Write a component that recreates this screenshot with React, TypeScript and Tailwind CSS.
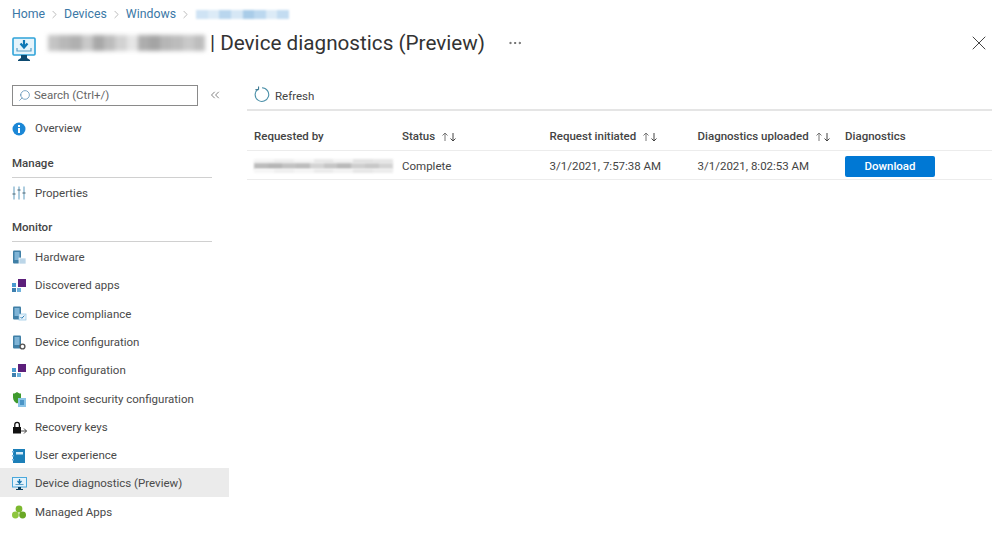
import { ChevronRight, ChevronsLeft, MoreHorizontal, Search, X } from "lucide-react";
import type { ReactNode } from "react";

const blurCols = ["#c4c4c4", "#b8b8b8", "#b0b0b0", "#c9c9c9", "#a8a8a8", "#bcbcbc", "#d2d2d2", "#e6e6e6", "#adadad", "#a4a4a4", "#b6b6b6", "#bcbcbc", "#c9c9c9", "#bdbdbd"];

function Redacted({ width, height, colors = blurCols, blur = "blur-[1px]" }: { width: string; height: string; colors?: string[]; blur?: string }) {
  return (
    <div className={`flex ${width} ${height} ${blur}`}>
      {colors.map((c, i) => (
        <div key={i} className="flex-1" style={{ backgroundColor: c }} />
      ))}
    </div>
  );
}

function PhoneIcon({ badge }: { badge: ReactNode }) {
  return (
    <svg width="16" height="16" viewBox="0 0 16 16">
      <rect x="1" y="0.5" width="8" height="13" rx="1" fill="#3f7fa6" />
      <rect x="2.5" y="2" width="5" height="8" fill="#7fb4d6" />
      {badge}
    </svg>
  );
}

const icons: Record<string, ReactNode> = {
  overview: (
    <svg width="14" height="14" viewBox="0 0 14 14">
      <circle cx="7" cy="7" r="6.5" fill="#1b87d6" />
      <rect x="6" y="6" width="2" height="5" fill="#fff" />
      <rect x="6" y="3" width="2" height="2" fill="#fff" />
    </svg>
  ),
  properties: (
    <svg width="14" height="14" viewBox="0 0 14 14">
      <path d="M2 0.5v13M7 0.5v13M12 0.5v13" stroke="#a5c8dc" strokeWidth="1.8" />
      <path d="M2 7v2M7 3v2M12 6v2" stroke="#7f98a6" strokeWidth="2.8" />
    </svg>
  ),
  hardware: <PhoneIcon badge={<rect x="7" y="8" width="7" height="6" fill="#bcd6e8" stroke="#fff" strokeWidth="0.7" />} />,
  apps: (
    <svg width="14" height="14" viewBox="0 0 14 14">
      <rect x="6" y="0" width="8" height="8" fill="#5c1f7a" />
      <rect x="0" y="4" width="4" height="4" fill="#4a9bd0" />
      <rect x="0" y="9" width="4" height="4" fill="#3d7fae" />
      <rect x="5" y="9" width="4" height="4" fill="#6fb1dc" />
    </svg>
  ),
  compliance: (
    <PhoneIcon
      badge={
        <g>
          <rect x="7" y="8" width="7" height="6" fill="#e8f3fa" stroke="#8fc2e2" strokeWidth="0.7" />
          <path d="M8.5 11l1.3 1.3 2.5-2.6" stroke="#2d7fb8" strokeWidth="1" fill="none" />
        </g>
      }
    />
  ),
  config: <PhoneIcon badge={<circle cx="10.5" cy="11.5" r="2.4" fill="#fff" stroke="#555" strokeWidth="1.4" />} />,
  endpoint: (
    <svg width="14" height="15" viewBox="0 0 14 15">
      <path d="M1 1.5c2 0 3-.6 4-1.5 1 .9 2 1.5 4 1.5v4c0 3-2 5-4 6-2-1-4-3-4-6z" fill="#3f9a2d" />
      <rect x="6" y="6" width="8" height="9" fill="#8cc4e6" />
      <rect x="8" y="8" width="4" height="5" fill="#4a94c6" />
    </svg>
  ),
  recovery: (
    <svg width="16" height="14" viewBox="0 0 16 14">
      <path d="M2.8 6V3.6a2.3 2.3 0 0 1 4.6 0V6" stroke="#111" strokeWidth="1.3" fill="none" />
      <rect x="1" y="6" width="8" height="6.5" fill="#111" />
      <path d="M9 10h5.5M12 7.5l2.5 2.5-2.5 2.5" stroke="#333" strokeWidth="0.9" fill="none" />
    </svg>
  ),
  ux: (
    <svg width="13" height="14" viewBox="0 0 13 14">
      <rect x="1" y="0" width="12" height="14" fill="#1c7fb8" />
      <rect x="0" y="2" width="2" height="1.5" fill="#6fb1dc" />
      <rect x="0" y="6" width="2" height="1.5" fill="#6fb1dc" />
      <rect x="0" y="10" width="2" height="1.5" fill="#6fb1dc" />
      <rect x="4" y="3" width="7" height="2.5" fill="#d5ebf8" />
    </svg>
  ),
  diag: (
    <svg width="15" height="14" viewBox="0 0 15 14">
      <rect x="0.5" y="0.5" width="14" height="9.5" fill="#e3f2fb" stroke="#4aa8dc" />
      <path d="M7.5 2v3.5M5.5 4l2 2.2 2-2.2" stroke="#1674ad" strokeWidth="1.3" fill="none" />
      <path d="M3.5 7.5h8" stroke="#5b9dc4" />
      <path d="M6 10h3v2h2v1H4v-1h2z" fill="#10405f" />
    </svg>
  ),
  managed: (
    <svg width="14" height="14" viewBox="0 0 14 14">
      <circle cx="7" cy="4" r="3.4" fill="#7cb82f" />
      <circle cx="3.4" cy="10" r="3.4" fill="#8ec63f" />
      <circle cx="10.6" cy="10" r="3.4" fill="#6aa825" />
    </svg>
  ),
};

function NavItem({ label, icon, active }: { label: string; icon: string; active?: boolean }) {
  return (
    <div className={`flex h-[28.3px] items-center pl-3 pt-[3px] ${active ? "bg-[#ebebeb]" : ""}`}>
      <div className="flex w-[23px] shrink-0">{icons[icon]}</div>
      <span className="text-[#4a4a4a]">{label}</span>
    </div>
  );
}

function SectionHead({ label }: { label: string }) {
  return (
    <div className="mx-3 w-[200px] border-b border-[#d0d0d0] pb-[6px] font-medium leading-4 text-[#444]">{label}</div>
  );
}

function SortArrows() {
  return (
    <svg width="16" height="12" viewBox="0 0 16 12" className="ml-[6px]">
      <path d="M4 10V2M1.5 4.5L4 2l2.5 2.5" stroke="#777" fill="none" />
      <path d="M12 2v8M9.5 7.5L12 10l2.5-2.5" stroke="#444" fill="none" />
    </svg>
  );
}

function Crumb({ label }: { label: string }) {
  return (
    <>
      <span>{label}</span>
      <ChevronRight className="mx-[3px] h-[13px] w-[13px] text-[#999]" strokeWidth={1.2} />
    </>
  );
}

export default function App() {
  return (
    <div className="h-[536px] w-[999px] overflow-hidden bg-white text-[11.5px] font-['Roboto',sans-serif]">
      <header className="pl-3 pr-[8px] pt-[6px]">
        <div className="flex h-4 items-center text-[12.3px] text-[#3b78a6]">
          <Crumb label="Home" />
          <Crumb label="Devices" />
          <Crumb label="Windows" />
          <div className="ml-px">
            <Redacted
              width="w-[93px]"
              height="h-[9px]"
              colors={["#cfe3f4", "#dcebf7", "#b9d6ee", "#d6e7f5", "#a9cce8", "#bcd8ef", "#dcebf7", "#c3dcf1"]}
            />
          </div>
        </div>
        <div className="mt-[7px] flex h-[28px] items-center">
          <svg width="24" height="26" viewBox="0 0 24 26" className="mt-[12px]">
            <rect x="1" y="2" width="22" height="17" rx="1" fill="#e6f4fb" stroke="#2fa3d9" strokeWidth="1.6" />
            <path d="M12 4v6M8.5 7.5l3.5 4 3.5-4" stroke="#0f78b5" strokeWidth="2.2" fill="none" />
            <path d="M5 12v3h14v-3" stroke="#5b9dc4" strokeWidth="1.2" fill="none" />
            <path d="M9 19h6v3l3 2v1H6v-1l3-2z" fill="#0d4a70" />
          </svg>
          <div className="ml-[12px] mr-[5px]">
            <Redacted width="w-[157px]" height="h-[16px]" blur="blur-[2px]" />
          </div>
          <h1 className="text-[20.7px] leading-7 text-[#333]">| Device diagnostics (Preview)</h1>
          <MoreHorizontal className="ml-[22px] h-4 w-4 text-[#555]" strokeWidth={1.3} />
          <X className="ml-auto h-6 w-6 text-[#444]" strokeWidth={1} />
        </div>
      </header>

      <div className="mt-[27px] flex">
        <aside className="w-[229px] shrink-0">
          <div className="flex h-[22px] items-center pl-3">
            <div className="flex h-[21px] w-[186px] items-center border border-[#8a8a8a] pl-[5px] text-[#666]">
              <Search className="mr-[3px] h-[13px] w-[13px] -scale-x-100 text-[#3b78a6]" strokeWidth={1.2} />
              <span className="mt-[2px]">Search (Ctrl+/)</span>
            </div>
            <ChevronsLeft className="ml-[10px] h-[14px] w-[14px] text-[#666]" strokeWidth={1.4} />
          </div>
          <div className="mt-[7px]">
            <NavItem label="Overview" icon="overview" />
          </div>
          <div className="mt-[13.5px]">
            <SectionHead label="Manage" />
          </div>
          <NavItem label="Properties" icon="properties" />
          <div className="mt-[13px]">
            <SectionHead label="Monitor" />
          </div>
          <NavItem label="Hardware" icon="hardware" />
          <NavItem label="Discovered apps" icon="apps" />
          <NavItem label="Device compliance" icon="compliance" />
          <NavItem label="Device configuration" icon="config" />
          <NavItem label="App configuration" icon="apps" />
          <NavItem label="Endpoint security configuration" icon="endpoint" />
          <NavItem label="Recovery keys" icon="recovery" />
          <NavItem label="User experience" icon="ux" />
          <NavItem label="Device diagnostics (Preview)" icon="diag" active />
          <NavItem label="Managed Apps" icon="managed" />
        </aside>

        <main className="ml-[18px] w-[745px]">
          <div className="flex h-[27px] items-start border-b-2 border-[#e5e5e5] pl-[7px] pt-[2px] text-[#444]">
            <svg width="16" height="17" viewBox="0 0 16 17" className="mr-[5px]">
              <path d="M3.8 3.2a6.8 6.8 0 1 0 4.2-1.4" stroke="#4a8fa8" strokeWidth="1.1" fill="none" />
              <path d="M4.6 0.5v3.2H1.4" stroke="#2c6d88" strokeWidth="1" fill="none" />
            </svg>
            <span className="mt-[2px]">Refresh</span>
          </div>
          <div className="grid h-[40px] grid-cols-[148px_147.5px_148px_147.5px_1fr] items-center border-b border-[#ececec] pl-[7px] pt-[12px] font-medium text-[#444]">
            <span>Requested by</span>
            <span className="flex items-center">Status<SortArrows /></span>
            <span className="flex items-center">Request initiated<SortArrows /></span>
            <span className="flex items-center">Diagnostics uploaded<SortArrows /></span>
            <span>Diagnostics</span>
          </div>
          <div className="grid h-[29px] grid-cols-[148px_147.5px_148px_147.5px_1fr] items-center border-b border-[#ececec] pl-[7px] pt-[2px] text-[#444]">
            <div className="flex w-[139px] flex-col">
              <Redacted width="w-full" height="h-[4px]" colors={["#f4f4f4", "#eeeeee", "#f6f6f6", "#e8e8e8", "#f2f2f2", "#e2e2e2", "#e6e6e6"]} />
              <Redacted width="w-full" height="h-[6px]" colors={["#bcbcbc", "#b6b6b6", "#c2c2c2", "#bdbdbd", "#d4d4d4", "#c6c6c6", "#bababa", "#cfcfcf", "#c8c8c8", "#d4d4d4"]} />
              <Redacted width="w-full" height="h-[4px]" colors={["#f6f6f6", "#efefef", "#f4f4f4", "#ebebeb", "#f2f2f2", "#e6e6e6", "#ececec"]} />
            </div>
            <span className="mt-[2px]">Complete</span>
            <span className="mt-[2px]">3/1/2021, 7:57:38 AM</span>
            <span className="mt-[2px]">3/1/2021, 8:02:53 AM</span>
            <button className="h-[21px] w-[90px] rounded-[2px] bg-[#0078d4] pt-[2px] font-medium text-white">Download</button>
          </div>
        </main>
      </div>
    </div>
  );
}
